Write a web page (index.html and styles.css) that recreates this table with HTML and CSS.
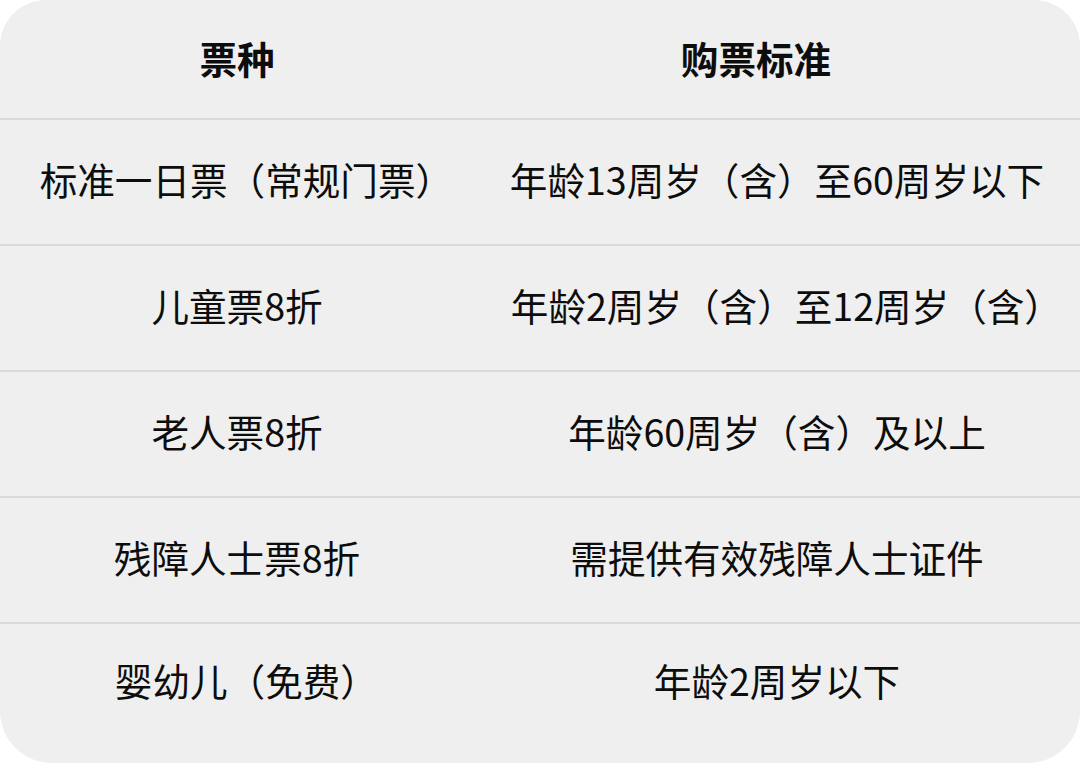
FILE: index.html
```html
<!DOCTYPE html>
<html lang="zh">
<head>
<meta charset="utf-8">
<link rel="stylesheet" href="styles.css">
</head>
<body>
<div class="table">
  <div class="row head">
    <div class="cell left">票种</div>
    <div class="cell right">购票标准</div>
  </div>
  <div class="row">
    <div class="cell left">标准一日票（常规门票<span class="cp">）</span></div>
    <div class="cell right">年龄13周岁（含）至60周岁以下</div>
  </div>
  <div class="row">
    <div class="cell left">儿童票8折</div>
    <div class="cell right">年龄2周岁（含）至12周岁（含<span class="cp">）</span></div>
  </div>
  <div class="row">
    <div class="cell left">老人票8折</div>
    <div class="cell right">年龄60周岁（含）及以上</div>
  </div>
  <div class="row">
    <div class="cell left">残障人士票8折</div>
    <div class="cell right">需提供有效残障人士证件</div>
  </div>
  <div class="row last">
    <div class="cell left">婴幼儿（免费<span class="cp">）</span></div>
    <div class="cell right">年龄2周岁以下</div>
  </div>
</div>
</body>
</html>
```
FILE: styles.css
```css
html, body {
  margin: 0;
  padding: 0;
  background: #ffffff;
}
body {
  width: 1080px;
  height: 764px;
  font-family: "Noto Sans CJK SC", "Noto Sans", sans-serif;
  color: #0d0d0d;
}
.table {
  width: 1080px;
  height: 763px;
  background: #efefef;
  border-radius: 46px 46px 52px 52px;
  display: flex;
  flex-direction: column;
  overflow: hidden;
}
.row {
  display: grid;
  grid-template-columns: 474px 1fr;
  height: 124px;
  border-bottom: 2px solid #dadada;
  align-items: center;
  flex: none;
}
.row.head {
  height: 118px;
  font-weight: 700;
}
.row.last {
  border-bottom: none;
  flex: 1;
  height: auto;
  padding-bottom: 22px;
}
.cell {
  text-align: center;
  font-size: 37.6px;
  line-height: 1.2;
  white-space: nowrap;
  padding-bottom: 6px;
}
.head .cell {
  padding-bottom: 2px;
}
.head .cell.right {
  padding-right: 42px;
}
.cp {
  font-feature-settings: "halt" 1;
}
```
